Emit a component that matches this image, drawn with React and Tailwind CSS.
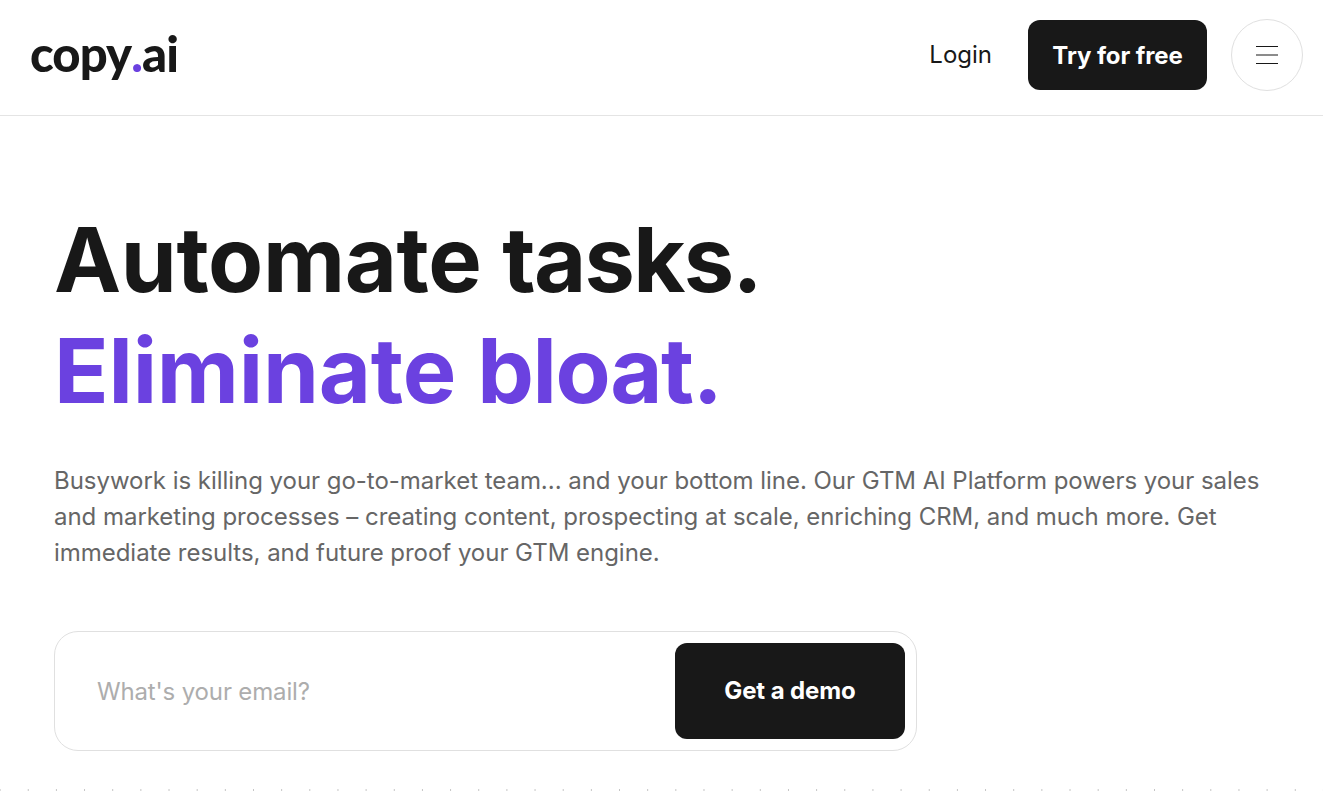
import React from 'react';

const Header = () => (
    <header className="flex h-[116px] items-center justify-between border-b border-[#e4e4e4] pb-[6px] pl-[30px] pr-5">
        <a className="-mt-[3px] flex items-baseline font-['Lato',sans-serif] text-[49px] leading-none font-black tracking-[-0.9px] text-[#181818]">
            copy<span className="text-[#6b41e0]">.</span>ai
        </a>
        <div className="flex items-center">
            <a className="text-[24px] leading-none text-[#181818]">Login</a>
            <button className="ml-9 flex h-[70px] w-[179px] items-center justify-center rounded-[12px] bg-[#181818] pt-[2px] text-[24px] font-bold tracking-[-0.1px] text-white">
                Try for free
            </button>
            <button className="ml-6 flex h-[72px] w-[72px] items-center justify-center rounded-full border border-[#e0e0e0]">
                <svg width="22" height="18" viewBox="0 0 22 18" stroke="#181818" strokeWidth="1">
                    <path d="M0 .5h22M0 9h22M0 17.5h22" />
                </svg>
            </button>
        </div>
    </header>
);

const App = () => {
    return (
        <div className="relative h-[793px] overflow-hidden bg-white font-['Inter',sans-serif]">
            <Header />
            <main className="pl-[54px] pr-[54px]">
                <h1 className="mt-[88px] text-[90px] leading-[111px] font-bold text-[#181818]">
                    <span className="tracking-[-0.4px]">Automate </span>
                    <span className="tracking-[-1.7px]">tasks.</span>
                    <br />
                    <span className="tracking-[-0.2px] text-[#6b41e0]">Eliminate </span>
                    <span className="tracking-[-1.4px] text-[#6b41e0]">bloat.</span>
                </h1>
                <p className="mt-[37px] max-w-[1215px] text-[24px] leading-[36px] tracking-[-0.035px] text-[#666666]">
                    Busywork is killing your go-to-market team... and your bottom line. Our GTM AI Platform powers your sales and marketing processes – creating content, prospecting at scale, enriching CRM, and much more. Get immediate results, and future proof your GTM engine.
                </p>
                <form className="mt-[60px] flex h-[120px] w-[863px] items-center justify-between rounded-[24px] border border-[#e0e0e0] pl-[42px] pr-[11px]">
                    <input
                        type="text"
                        placeholder="What's your email?"
                        className="flex-1 bg-transparent pt-[2px] text-[24px] tracking-[-0.15px] outline-none placeholder:text-[#adadad]"
                    />
                    <button type="button" className="flex h-[96px] w-[230px] items-center justify-center rounded-[12px] bg-[#181818] text-[24px] font-bold tracking-[-0.1px] text-white">
                        Get a demo
                    </button>
                </form>
            </main>
            <div className="absolute bottom-[2px] left-0 h-[2px] w-full bg-[radial-gradient(circle,#c4c4c4_1px,transparent_1px)] bg-[length:28.17px_2px] bg-[position:-14px_0]"></div>
        </div>
    );
};

export default App;
